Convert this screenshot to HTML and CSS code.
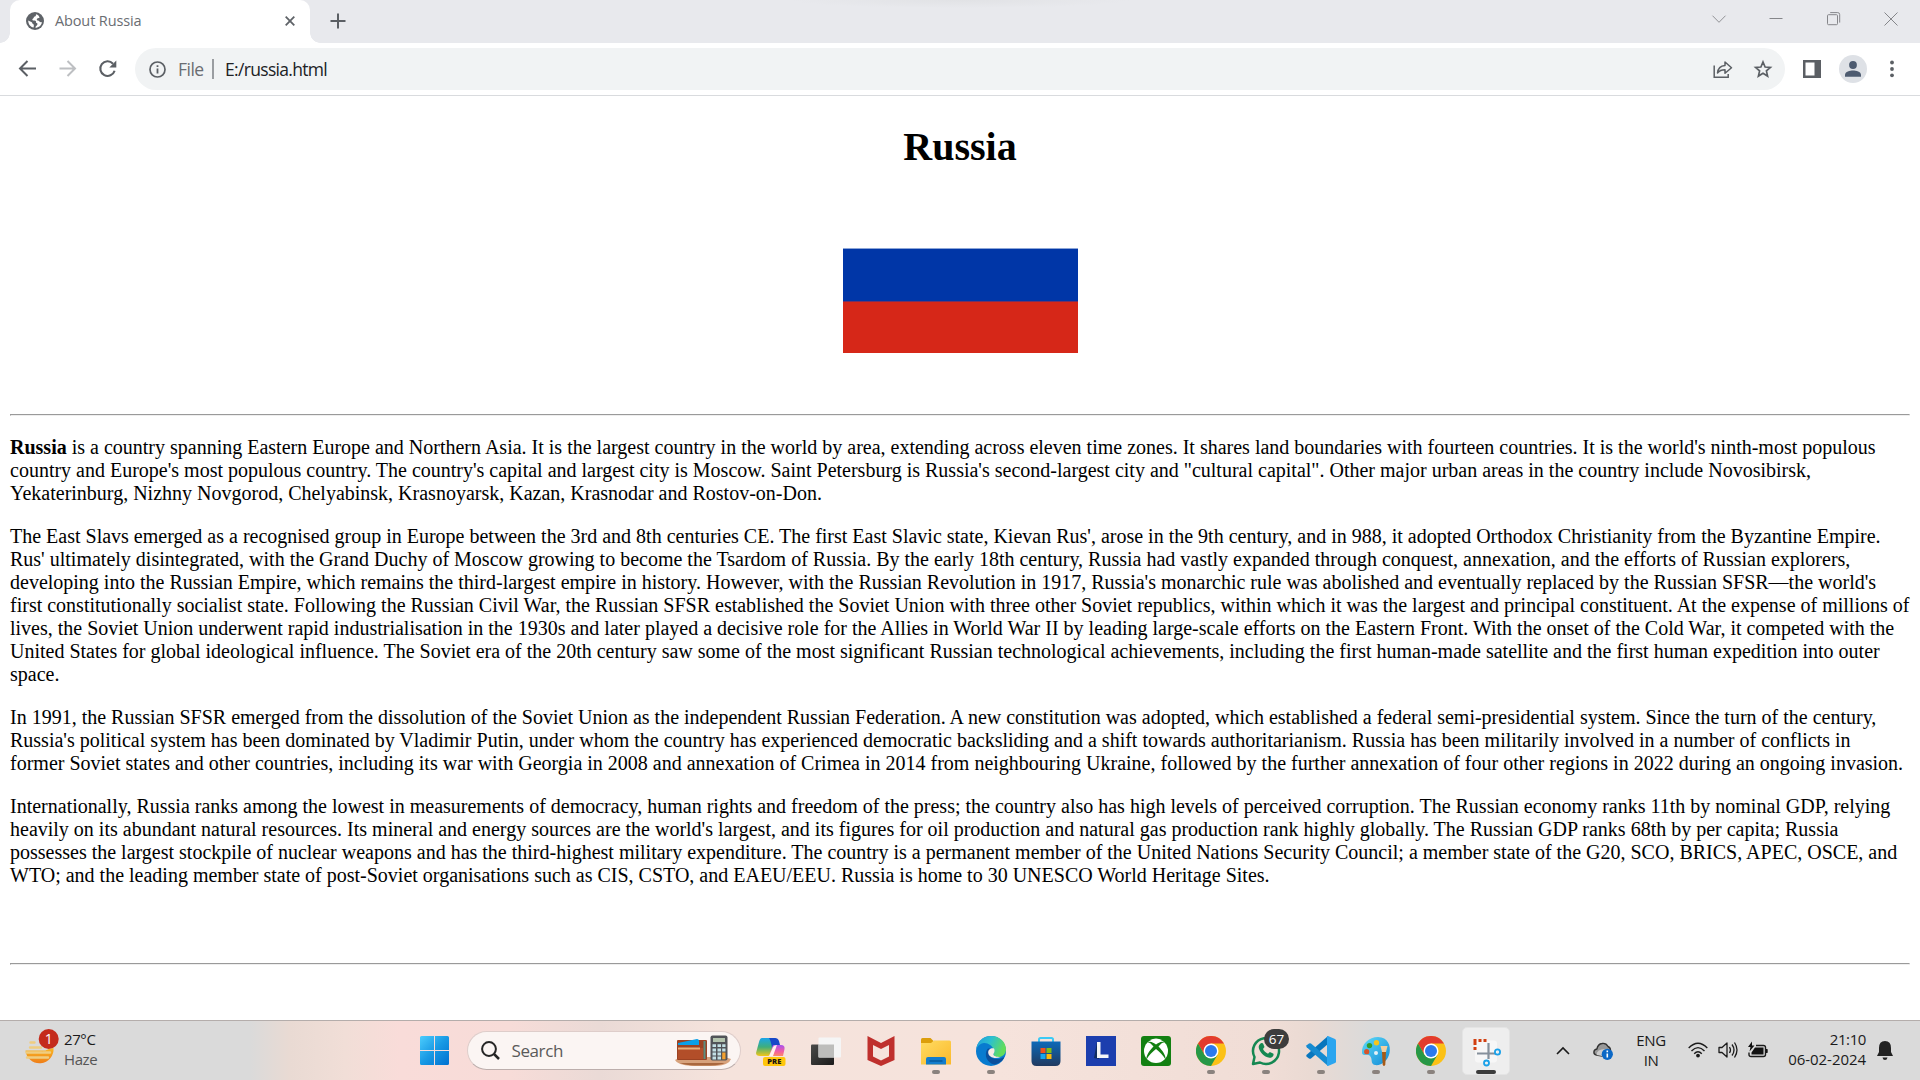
FILE: index.html
```html
<!DOCTYPE html>
<html lang="en">
<head>
<meta charset="utf-8">
<title>About Russia</title>
<link rel="stylesheet" href="styles.css">
</head>
<body>
<svg class="defs" width="0" height="0" aria-hidden="true">
  <defs>
    <linearGradient id="gWin" x1="0" y1="0" x2="1" y2="1"><stop offset="0" stop-color="#4ccdfd"/><stop offset=".5" stop-color="#1899e4"/><stop offset="1" stop-color="#0070d0"/></linearGradient>
    <linearGradient id="gSun" x1="0" y1="0" x2="0" y2="1"><stop offset="0" stop-color="#f9b825"/><stop offset="1" stop-color="#ef7d18"/></linearGradient>
    <linearGradient id="gCopA" x1="0" y1="0" x2="0" y2="1"><stop offset="0" stop-color="#1aa5ea"/><stop offset=".5" stop-color="#3fae7c"/><stop offset="1" stop-color="#f3c615"/></linearGradient>
    <linearGradient id="gCopB" x1="0" y1="0" x2="0" y2="1"><stop offset="0" stop-color="#a953ef"/><stop offset=".6" stop-color="#f35da0"/><stop offset="1" stop-color="#fb8a66"/></linearGradient>
    <linearGradient id="gDark" x1="0" y1="0" x2="1" y2="1"><stop offset="0" stop-color="#4a4a48"/><stop offset="1" stop-color="#1b1b1b"/></linearGradient>
    <linearGradient id="gFold" x1="0" y1="0" x2="1" y2="1"><stop offset="0" stop-color="#ffdc62"/><stop offset="1" stop-color="#fbb92c"/></linearGradient>
    <linearGradient id="gEdge" x1="0" y1="0" x2="1" y2=".35"><stop offset="0" stop-color="#1e9bdc"/><stop offset=".5" stop-color="#2cc0cf"/><stop offset="1" stop-color="#62dd5b"/></linearGradient>
    <linearGradient id="gStore" x1="0" y1="0" x2="0" y2="1"><stop offset="0" stop-color="#0d69b8"/><stop offset="1" stop-color="#213a60"/></linearGradient>
    <linearGradient id="gPal" x1="0" y1="0" x2="1" y2="1"><stop offset="0" stop-color="#5fdcf9"/><stop offset="1" stop-color="#128ad6"/></linearGradient>
    <symbol id="chrome" viewBox="0 0 30 30">
      <circle cx="15" cy="15" r="15" fill="#fbc116"/>
      <path d="M2 7.5A15 15 0 0 1 28 7.5H15L8.5 18.7Z" fill="#e33b2e"/>
      <path d="M2 7.5A15 15 0 0 0 15 30L21.5 18.7 15 22 8.5 18.7Z" fill="#279847"/>
      <circle cx="15" cy="15" r="7.5" fill="#fff"/><circle cx="15" cy="15" r="6" fill="#2c79ec"/>
    </symbol>
  </defs>
</svg>

<header class="browser">
  <div class="tabstrip">
    <div class="tab">
      <svg class="globe" viewBox="0 0 18 18" width="18" height="18"><circle cx="9" cy="9" r="9" fill="#5f6368"/><path d="M10 2.3c-.2 1.3.2 2-1.3 2.3C7.200 5 8.300 6.500 6.500 7c-.6 1.600.5 1.500 2 1.500s1.800 1.300 1.500 2.200c1 .3 1.700.7 1.400 1.700-.6 1.500-2 1.500-2 3.300 3.300 0 6.300-2.500 6.500-5.800-1.500.6-2.500 0-3-1.200-1.300.2-2.500-.4-2-1.700.3-1 1.600-.9 2.600-1.100-.2-1.800-1.400-3.200-3.500-3.600zM2.200 8.500c.9.7 2 .9 3.200 1.600 1.200.6.600 1.700 1.700 2 .9.300.9 1.500.5 3.500C4.500 15 2.200 12 2.200 8.500z" fill="#fff"/></svg>
      <span class="tab-title">About Russia</span>
      <svg class="tab-close" viewBox="0 0 10 10" width="10" height="10"><path d="M.7.7l8.600 8.600M9.300.7L.7 9.300" stroke="#5f6368" stroke-width="1.800"/></svg>
    </div>
    <svg class="newtab" viewBox="0 0 16 16" width="16" height="16"><path d="M8 .5v15M.5 8h15" stroke="#5b5f64" stroke-width="2"/></svg>
    <div class="window-controls">
      <svg viewBox="0 0 14 14" width="14" height="14"><path d="M.5 3.700L7 10.300 13.500 3.700" fill="none" stroke="#919296"/></svg>
      <svg viewBox="0 0 14 14" width="14" height="14"><path d="M.5 6.500h13" stroke="#85868a"/></svg>
      <svg viewBox="0 0 14 14" width="14" height="14"><rect x=".5" y="2.700" width="10" height="10" rx="1" fill="none" stroke="#85868a"/><path d="M3.200.6h7.500q2 0 2 2v8" fill="none" stroke="#85868a"/></svg>
      <svg viewBox="0 0 14 14" width="14" height="14"><path d="M.5.5l13 13M13.500.5L.5 13.500" stroke="#85868a"/></svg>
    </div>
  </div>
  <div class="toolbar">
    <div class="nav">
      <svg viewBox="0 0 18 18" width="18" height="18"><path d="M17 8.500H2M8.500 1L1 8.500 8.500 16" fill="none" stroke="#5b5f64" stroke-width="2"/></svg>
      <svg viewBox="0 0 18 18" width="18" height="18"><path d="M.5 8.500H16M8.500 1L16 8.500 8.500 16" fill="none" stroke="#bdbfc2" stroke-width="2"/></svg>
      <svg viewBox="0 0 18 18" width="18" height="18"><path d="M14 3.700A7.300 7.300 0 1 0 15.600 10.700" fill="none" stroke="#5b5f64" stroke-width="2.100"/><path d="M17.300.5V7.500h-7z" fill="#5b5f64"/></svg>
    </div>
    <div class="omnibox">
      <svg viewBox="0 0 17 17" width="17" height="17"><circle cx="8.500" cy="8.500" r="7.500" fill="none" stroke="#5b5f64" stroke-width="1.700"/><path d="M8.500 7.400v5M8.500 4.200v1.900" stroke="#5b5f64" stroke-width="1.800"/></svg>
      <span class="scheme">File</span>
      <span class="bar"></span>
      <span class="url">E:/russia.html</span>
      <svg class="share" viewBox="0 0 20 18" width="20" height="18"><path d="M1.200 5.500v11.700h14V14" fill="none" stroke="#5b5f64" stroke-width="1.500"/><path d="M4.500 13C5 8.500 7.500 5.800 12 5.500V2l6.500 5.800L12 13.300V9.800C8.500 9.800 6.500 10.500 4.500 13z" fill="none" stroke="#5b5f64" stroke-width="1.500" stroke-linejoin="round"/></svg>
      <svg viewBox="0 0 18 18" width="18" height="18"><path d="M9 2l2.100 5 5.300.4-4 3.500 1.200 5.200L9 13.300l-4.600 2.800 1.200-5.200-4-3.500L6.900 7z" fill="none" stroke="#5b5f64" stroke-width="1.700"/></svg>
    </div>
    <svg class="panel" viewBox="0 0 18 18" width="18" height="18"><path d="M0 0h18v18H0zM2.500 2.500v13h9v-13z" fill="#5b5f64" fill-rule="evenodd"/></svg>
    <svg class="avatar" viewBox="0 0 28 28" width="28" height="28"><circle cx="14" cy="14" r="14" fill="#dee1e6"/><circle cx="14" cy="10" r="3.900" fill="#4d5b70"/><path d="M6 21.800v-2c0-3 5-4.300 8-4.300s8 1.300 8 4.300v2z" fill="#4d5b70"/></svg>
    <svg class="menu" viewBox="0 0 4 18" width="4" height="18"><g fill="#5b5f64"><circle cx="2" cy="2.500" r="1.900"/><circle cx="2" cy="9" r="1.900"/><circle cx="2" cy="15.300" r="1.900"/></g></svg>
  </div>
</header>

<main class="page">
  <h1>Russia</h1>
  <div class="flag"><div class="stripe white"></div><div class="stripe blue"></div><div class="stripe red"></div></div>
  <hr>
  <article>
  <p><b>Russia</b> is a country spanning Eastern Europe and Northern Asia. It is the largest country in the world by area, extending across eleven time zones. It shares land boundaries with fourteen countries. It is the world's ninth-most populous country and Europe's most populous country. The country's capital and largest city is Moscow. Saint Petersburg is Russia's second-largest city and "cultural capital". Other major urban areas in the country include Novosibirsk, Yekaterinburg, Nizhny Novgorod, Chelyabinsk, Krasnoyarsk, Kazan, Krasnodar and Rostov-on-Don.</p>
  <p>The East Slavs emerged as a recognised group in Europe between the 3rd and 8th centuries CE. The first East Slavic state, Kievan Rus', arose in the 9th century, and in 988, it adopted Orthodox Christianity from the Byzantine Empire. Rus' ultimately disintegrated, with the Grand Duchy of Moscow growing to become the Tsardom of Russia. By the early 18th century, Russia had vastly expanded through conquest, annexation, and the efforts of Russian explorers, developing into the Russian Empire, which remains the third-largest empire in history. However, with the Russian Revolution in 1917, Russia's monarchic rule was abolished and eventually replaced by the Russian SFSR—the world's first constitutionally socialist state. Following the Russian Civil War, the Russian SFSR established the Soviet Union with three other Soviet republics, within which it was the largest and principal constituent. At the expense of millions of lives, the Soviet Union underwent rapid industrialisation in the 1930s and later played a decisive role for the Allies in World War II by leading large-scale efforts on the Eastern Front. With the onset of the Cold War, it competed with the United States for global ideological influence. The Soviet era of the 20th century saw some of the most significant Russian technological achievements, including the first human-made satellite and the first human expedition into outer space.</p>
  <p>In 1991, the Russian SFSR emerged from the dissolution of the Soviet Union as the independent Russian Federation. A new constitution was adopted, which established a federal semi-presidential system. Since the turn of the century, Russia's political system has been dominated by Vladimir Putin, under whom the country has experienced democratic backsliding and a shift towards authoritarianism. Russia has been militarily involved in a number of conflicts in former Soviet states and other countries, including its war with Georgia in 2008 and annexation of Crimea in 2014 from neighbouring Ukraine, followed by the further annexation of four other regions in 2022 during an ongoing invasion.</p>
  <p>Internationally, Russia ranks among the lowest in measurements of democracy, human rights and freedom of the press; the country also has high levels of perceived corruption. The Russian economy ranks 11th by nominal GDP, relying heavily on its abundant natural resources. Its mineral and energy sources are the world's largest, and its figures for oil production and natural gas production rank highly globally. The Russian GDP ranks 68th by per capita; Russia possesses the largest stockpile of nuclear weapons and has the third-highest military expenditure. The country is a permanent member of the United Nations Security Council; a member state of the G20, SCO, BRICS, APEC, OSCE, and WTO; and the leading member state of post-Soviet organisations such as CIS, CSTO, and EAEU/EEU. Russia is home to 30 UNESCO World Heritage Sites.</p>
  </article>
  <hr>
</main>

<footer class="taskbar">
  <div class="weather">
    <svg viewBox="0 0 36 38" width="36" height="38">
      <path d="M1.500 21.500h20q4-2.500 8-2.500A14 14 0 0 1 1.500 21.500z" fill="url(#gSun)"/>
      <path d="M6.500 13.500h4M6 18.500h11M2.500 23.500h15M19 23.500h7M3 28.500h21" stroke="#efcd80" stroke-width="2.400" stroke-linecap="round"/>
      <circle cx="24.700" cy="10" r="10" fill="#c42b1c"/>
      <text x="24.700" y="15" text-anchor="middle" font-size="14" fill="#fff">1</text>
    </svg>
    <div class="weather-text"><span>27°C</span><span class="cond">Haze</span></div>
  </div>
  <svg class="start" viewBox="0 0 29 29" width="29" height="29"><path d="M0 1.500Q0 0 1.500 0H14v14H0zM15 0h12.500Q29 0 29 1.500V14H15zM0 15h14v14H1.500Q0 29 0 27.500zM15 15h14v12.500q0 1.500-1.500 1.500H15z" fill="url(#gWin)"/></svg>
  <div class="search">
    <svg viewBox="0 0 19 19" width="19" height="19"><circle cx="8" cy="8" r="6.900" fill="none" stroke="#252525" stroke-width="2"/><path d="M13 13l5 5" stroke="#252525" stroke-width="2.500"/></svg>
    <span>Search</span>
    <svg class="wallet" viewBox="0 0 56 32" width="56" height="32">
      <path d="M0 25q4-3 12-3h30q10 0 14 2-2 6-15 7H17Q2 30 0 25z" fill="#d7a27c"/><path d="M5 28h45q-5 2-15 2.500H20Q10 30 5 28z" fill="#a9683f"/>
      <rect x="2" y="5" width="30" height="20" rx="1" fill="#9c4222"/><path d="M3 13h25v11H3z" fill="#b24e29"/><path d="M3 10V8l19-4q2 0 2 2v4z" fill="#0aa0e8"/><path d="M3 13.500h22" stroke="#e8b07a" stroke-width="2"/><path d="M29.500 6v18" stroke="#5d8d7c" stroke-width="2"/>
      <rect x="35.500" y=".5" width="17" height="25" rx="2" fill="#515459"/><rect x="38" y="3" width="12" height="4" fill="#b3c4ae"/>
      <path d="M37.500 10.700H41m1.500 0H46m1.200 0h3.300M37.500 15H41m1.500 0H46m1.200 0h3.300M37.500 19H41m1.500 0H46M37.500 23H41m1.500 0H46" stroke="#c2e0e5" stroke-width="2.800"/><path d="M47.200 17.500h3.300v6.800h-3.300z" fill="#f3a12e"/>
    </svg>
  </div>
  <nav class="apps">
    <div class="app"><svg viewBox="0 0 30 30" width="30" height="30">
      <path d="M6 2h12q3 0 2 4l-5 12q-1 2-3 2H4q-4 0-4-3L3 6q1-4 3-4z" fill="url(#gCopA)"/><path d="M13 2h6q3 0 4 3l1 4h-4q-3 0-4 3-1-7-3-10z" fill="#1648c8"/><path d="M17 9h8q4 0 3.500 4L27 20H13z" fill="url(#gCopB)"/><path d="M13 20l4-9q1-2 4-2l-4 11z" fill="#fff0ec"/>
      <rect x="7" y="21" width="22.500" height="9" rx="2" fill="#ffc60b"/><text x="18.300" y="28.300" text-anchor="middle" font-size="7.500" font-weight="800" fill="#171512">PRE</text></svg></div>
    <div class="app"><svg viewBox="0 0 30 30" width="30" height="30"><rect x="0" y="8.500" width="23" height="20.500" rx="1" fill="url(#gDark)"/><rect x="7.500" y="1.500" width="22.500" height="20" rx="1" fill="#f5f5f5"/><path d="M7.500 8.500H23v13H7.500z" fill="#bdbdbb"/></svg></div>
    <div class="app"><svg viewBox="0 0 30 30" width="30" height="30"><path d="M1.500 0l13.500 7L28.500 0v24L15 30 1.500 24zM7 9v11.500l8 4 8-4V9l-8 4z" fill="#bf302d" fill-rule="evenodd"/></svg></div>
    <div class="app running"><svg viewBox="0 0 30 30" width="30" height="30"><path d="M0 8V3.500Q0 2 1.500 2h8l3 3v4H0z" fill="#dc9e0b"/><path d="M0 7h10l3-2.500h15.500Q30 4.500 30 6v22.500H0z" fill="url(#gFold)"/><path d="M5 28.500V23q0-2 2-2h16q2 0 2 2v5.500z" fill="#147dcc"/><path d="M9 25h12" stroke="#07599c" stroke-width="1.300" stroke-linecap="round"/></svg></div>
    <div class="app running"><svg viewBox="0 0 30 30" width="30" height="30"><circle cx="15" cy="15" r="15" fill="#087bcf"/><path d="M28 22.500l3-4v10l-5 1z" fill="#f5e2db"/><path d="M.2 14C1 5 7.500 0 15 0c9 0 15 6.500 15 13.200 0 4.800-3.500 7.800-7.500 7.800-3.500 0-5.600-1.500-4.900-3.200.6-1.200.9-2 .4-3.300C16.500 9.500 12 6.700 8 7 4 7.300 1 10.500.2 14z" fill="url(#gEdge)"/><path d="M11.500 13c-4 6-.5 14 7 15.500 4.500-.8 8-3.500 9.500-6.500.2-.7-.5-1-1-.6-6 3.200-12.500 1.200-14-3.200-.7-2 .1-4 1.500-5.200-1-.6-2.200-.6-3 0z" fill="#0b509d"/><path d="M18 12.500c-2.500-1-6 .8-5.800 4.200.3 4.300 6.800 6.800 12.500 4.200-4 .5-8.500-1-7-3.300.8-1.300 1.300-3.500.3-5.100z" fill="#f7eae5"/></svg></div>
    <div class="app"><svg viewBox="0 0 30 30" width="30" height="30"><path d="M8 7V3.500Q8 2 9.500 2h11Q22 2 22 3.500V7" fill="none" stroke="#3ccaf5" stroke-width="2"/><path d="M.5 5.500h29V25q0 5-5 5h-19q-5 0-5-5z" fill="url(#gStore)"/><path d="M9.500 12h5v5h-5z" fill="#f1511b"/><path d="M15.500 12h5v5h-5z" fill="#80bd16"/><path d="M9.500 18h5v5h-5z" fill="#16a6ee"/><path d="M15.500 18h5v5h-5z" fill="#fcba0a"/></svg></div>
    <div class="app"><svg viewBox="0 0 30 30" width="30" height="30"><path d="M0 0h30v30H0z" fill="#1c3eae"/><path d="M8 22l3-16h2v17z" fill="#112d61"/><path d="M11 6h3.500v12.500h8V22H11z" fill="#f5f6f7"/></svg></div>
    <div class="app"><svg viewBox="0 0 30 30" width="30" height="30"><rect width="30" height="30" rx="3" fill="#138012"/><circle cx="15" cy="15" r="12" fill="#fff"/><path d="M6.500 6.500C9 4.500 12.500 6.500 15 8.500c2.500-2 6-4 8.500-2-2-.2-4 1.500-6 4 4 4 7.500 9 7 13-2.200-4-6-8-9.500-10.500C11.500 15.500 7.700 19.500 5.500 23.500 5 19.500 8.500 14.500 12.500 10.500c-2-2.500-4-4.200-6-4z" fill="#138012"/><path d="M9 4q6-3 12 0-3-.2-6 1.800Q12 3.800 9 4z" fill="#fff"/></svg></div>
    <div class="app running"><svg width="30" height="30"><use href="#chrome"/></svg></div>
    <div class="app running"><svg viewBox="0 0 30 30" width="30" height="30"><path d="M2 28l1.500-7A13 13 0 1 1 9 26.500z" fill="none" stroke="#158852" stroke-width="2.500" stroke-linejoin="round"/><path d="M9 8c1.500-1.500 3-1 3.500.5l1 2.500-1.500 2c1 2 2.700 3.700 5 4.800l1.800-1.800 3.700 1.800c.5 2.500-1.500 4-4 4-5.500-.5-11-7-10.800-11 .1-1.200.6-2 1.300-2.800z" fill="#158852"/></svg><span class="badge">67</span></div>
    <div class="app running"><svg viewBox="0 0 30 30" width="30" height="30"><path d="M22 0v8L5 22.500q-1 .7-2 0L.7 20.700q-1-1 0-2z" fill="#0876bd"/><path d="M22 30v-8L5 7.500q-1-.7-2 0L.7 9.300q-1 1 0 2z" fill="#168bd1"/><path d="M22 0l7 3q1 .5 1 1.500v21q0 1-1 1.500l-7 3q-1 0-1-1V1q0-1 1-1z" fill="#2ba5ef"/></svg></div>
    <div class="app running"><svg viewBox="0 0 30 30" width="30" height="30"><path d="M17 1C27 1 30 10 28.500 17 27 25 20 30 14 29c-5-1-2-6-5-9S2 21 1 17C0 8 8 1 17 1z" fill="url(#gPal)"/><circle cx="15.500" cy="6.800" r="2.700" fill="#f7c51c"/><circle cx="8.500" cy="9.600" r="2.700" fill="#2f9c2f"/><circle cx="5.700" cy="15.700" r="2.600" fill="#d7542a"/><circle cx="15" cy="17" r="2" fill="#e4f1f7"/><path d="M19.500 10h7l-1.500 6h-4z" fill="#f2cfa0"/><path d="M21 16h4l-.7 12.500q-1.300 3-2.600 0z" fill="#a65a16"/></svg></div>
    <div class="app running"><svg width="30" height="30"><use href="#chrome"/></svg></div>
    <div class="app running active"><svg viewBox="0 0 30 30" width="30" height="30"><rect x="4" y="4.500" width="22" height="22" rx="3" fill="#f7f7f7"/><path d="M2.500 4.500h13.500M4 6v10" fill="none" stroke="#d23f10" stroke-width="3" stroke-dasharray="3 2"/><path d="M17.500 7v16M6 17.500h18" stroke="#85909b" stroke-width="2.200"/><circle cx="26.500" cy="16" r="2.600" fill="none" stroke="#1ba1e9" stroke-width="1.800"/><circle cx="15.500" cy="27" r="2.500" fill="none" stroke="#1ba1e9" stroke-width="1.800"/></svg></div>
  </nav>
  <div class="tray">
    <svg class="chev" viewBox="0 0 14 8" width="14" height="8"><path d="M1 7l6-6 6 6" fill="none" stroke="#1a1a1a" stroke-width="1.600"/></svg>
    <svg class="cloud" viewBox="0 0 20 18" width="20" height="18"><path d="M3.500 13Q.8 12.500.9 10q.2-2.500 3-3Q5 2 9 1.500q4-.7 6 3 2.500 1 2.500 4L9 14z" fill="#999" stroke="#333" stroke-width="1.400"/><path d="M3.500 13q0-6 9-6l4 1L9 14z" fill="#ccc"/><circle cx="14.300" cy="12.300" r="5.600" fill="#0b68c6"/><path d="M14.300 11.500v4M14.300 8.600v1.600" stroke="#fff" stroke-width="1.600"/></svg>
    <div class="lang"><span>ENG</span><span>IN</span></div>
    <svg class="wifi" viewBox="0 0 20 16" width="20" height="16"><g fill="none" stroke="#1b1b1b" stroke-width="1.400"><path d="M.7 6Q10-3.500 19.300 6M3.500 9Q10 2.200 16.500 9M6.200 11.700Q10 8 13.800 11.700"/></g><circle cx="10" cy="13.600" r="1.900" fill="#1b1b1b"/></svg>
    <svg class="vol" viewBox="0 0 20 18" width="20" height="18"><path d="M1 6.500h3L9 2v14L4 11.500H1z" fill="none" stroke="#1b1b1b" stroke-width="1.300" stroke-linejoin="round"/><path d="M11.500 6q2 3 0 6M14 3.500q4 5.500 0 11M16.500 1.500q5 7.500 0 15" fill="none" stroke="#1b1b1b" stroke-width="1.300"/></svg>
    <svg class="batt" viewBox="0 0 20 16" width="20" height="16"><path d="M8 2.500h7.500Q17.500 2.500 17.500 4.500v7q0 2-2 2H3q-2 0-2-2v-2" fill="none" stroke="#1b1b1b" stroke-width="1.400"/><path d="M7 4.500h8.500v7H3.500v-2zM18 6h1.500q.5 2 0 4H18zM4-1.500L0 4h2.500L1.500 8.500 6.500 2.500H4z" fill="#111"/></svg>
    <div class="clock"><span class="time">21:10</span><span class="date">06-02-2024</span></div>
    <svg class="bell" viewBox="0 0 16 19" width="16" height="19"><path d="M8 0q6 0 6 7v4l2 4H0l2-4V7q0-7 6-7zM5.500 16.500h5Q10 19 8 19t-2.500-2.500z" fill="#222"/></svg>
  </div>
</footer>
</body>
</html>
```
FILE: styles.css
```css
* { box-sizing: border-box; }
body {
  margin: 0;
  width: 1920px;
  height: 1080px;
  overflow: hidden;
  display: flex;
  flex-direction: column;
  background: #fff;
  font-family: "Open Sans", "Noto Sans", sans-serif;
}
svg { display: block; flex: none; overflow: visible; }
.defs { position: absolute; }
span { white-space: nowrap; }

/* browser chrome */
.browser { height: 96px; flex: none; border-bottom: 1px solid #d9dbde; }
.tabstrip {
  height: 43px;
  display: flex;
  align-items: flex-start;
  padding-left: 10px;
  background: radial-gradient(ellipse 170px 8px at 960px 0, #e1e2e5, #e8e9ed);
}
.tab {
  position: relative;
  width: 300px;
  height: 43px;
  padding: 0 15px 2px 16px;
  display: flex;
  align-items: center;
  background: #fff;
  border-radius: 10px 10px 0 0;
}
.tab::before, .tab::after {
  content: "";
  position: absolute;
  bottom: 0;
  width: 10px;
  height: 10px;
}
.tab::before { left: -10px; background: radial-gradient(circle at 0 0, transparent 9.5px, #fff 10px); }
.tab::after { right: -10px; background: radial-gradient(circle at 100% 0, transparent 9.5px, #fff 10px); }
.tab-title { margin-left: 11px; font-size: 14.5px; letter-spacing: -0.13px; color: #6a6d72; }
.tab-close { margin-left: auto; }
.newtab { margin: 13px 0 0 19.500px; }
.window-controls { margin: 12px 22px 0 auto; display: flex; gap: 43.3px; }
.toolbar { height: 52px; display: flex; align-items: center; padding-left: 19px; }
.nav { display: flex; gap: 22px; width: 116px; }
.omnibox {
  width: 1650px;
  height: 42px;
  border-radius: 21px;
  padding: 0 13.500px 0 14px;
  background: #f1f3f4;
  display: flex;
  align-items: center;
  font-size: 17.5px;
}
.scheme { margin-left: 12px; width: 34px; color: #6a6d72; letter-spacing: -0.5px; }
.bar { width: 2px; height: 20px; background: #9a9da1; }
.url { margin-left: 11px; color: #202124; letter-spacing: -0.68px; }
.share { margin-left: auto; margin-right: 20.500px; }
.panel { margin-left: 18px; }
.avatar { margin-left: 18px; }
.menu { margin-left: 23px; }

/* document */
.page {
  height: 924px;
  flex: none;
  padding: 0 10px;
  font: 20px/23px "Liberation Serif", "Times New Roman", serif;
  color: #000;
}
h1 { margin: 28px 0 0; font-size: 40px; line-height: 46px; text-align: center; }
.flag { width: 235px; margin: 26px auto 61px; }
.stripe { height: 52px; }
.white { background: #fff; }
.blue { height: 53px; background: #0036a7; border-top: 1px solid #8ca5d7; }
.red { background: #d62718; border-top: 1px solid #753060; }
hr { margin: 0; height: 2px; border: 1px solid; border-color: #9a9a9a #eee #eee #9a9a9a; }
article { display: flex; flex-direction: column; gap: 20px; padding: 20px 0 76px; }
p { margin: 0; }

/* taskbar */
.taskbar {
  height: 60px;
  flex: none;
  display: flex;
  align-items: center;
  border-top: 1px solid #b4adab;
  background: linear-gradient(90deg, #dadada 250px, #e9dad3 290px, #f1ded7 345px, #f9dcd9 400px, #f7dcd8 510px, #eadad6 600px, #f5e3dc 720px, #f6e3dc 1000px, #f0ddd6 1270px, #eadad3 1310px, #dadada 1370px);
  font-size: 15px;
  color: #1a1a1a;
}
.weather { width: 420px; padding-left: 24px; display: flex; align-items: center; gap: 4px; }
.weather svg { margin-top: -6px; }
.weather-text { display: flex; flex-direction: column; line-height: 20px; letter-spacing: -0.4px; margin-top: -4px; }
.cond { color: #555; }
.search {
  width: 274px;
  height: 39px;
  margin-left: 17.500px;
  padding: 0 9px 0 13px;
  display: flex;
  align-items: center;
  border-radius: 20px;
  border: 1px solid #decdca;
  border-bottom-color: #bcaeac;
  background: #fbf5f3;
}
.search span { margin-left: 12px; font-size: 17px; letter-spacing: -0.4px; color: #5a5a5a; }
.wallet { margin-left: auto; }
.apps { display: flex; margin-left: 2.500px; }
.app { position: relative; width: 55px; height: 59px; display: grid; place-items: center; }
.running::after {
  content: "";
  position: absolute;
  left: 23.500px;
  bottom: 6px;
  width: 8px;
  height: 4px;
  border-radius: 2px;
  background: #8a827e;
}
.active { width: 48px; height: 48px; margin: 5.500px 3.500px; border-radius: 5px; background: #eee; border: 1px solid #e4e4e4; }
.active::after { left: 13px; bottom: 0; width: 20px; background: #3b3b3b; }
.badge {
  position: absolute;
  left: 26px;
  top: 8px;
  width: 25px;
  height: 20px;
  border-radius: 10px;
  background: #3d3d3d;
  color: #fff;
  font-size: 13.5px;
  line-height: 20px;
  text-align: center;
}
.tray { flex: 1; display: flex; align-items: center; padding-left: 43px; letter-spacing: -0.4px; }
.cloud { margin-left: 23px; }
.lang { width: 36px; margin-left: 20px; display: flex; flex-direction: column; align-items: center; line-height: 20px; margin-top: -2px; }
.wifi { margin-left: 19px; margin-top: -2px; }
.vol { margin-left: 10px; margin-top: -1px; }
.batt { margin-left: 10px; }
.clock { width: 98px; display: flex; flex-direction: column; align-items: flex-end; line-height: 20px; margin-top: -4px; }
.date { letter-spacing: -0.05px; }
.bell { margin-left: 11px; }
```
